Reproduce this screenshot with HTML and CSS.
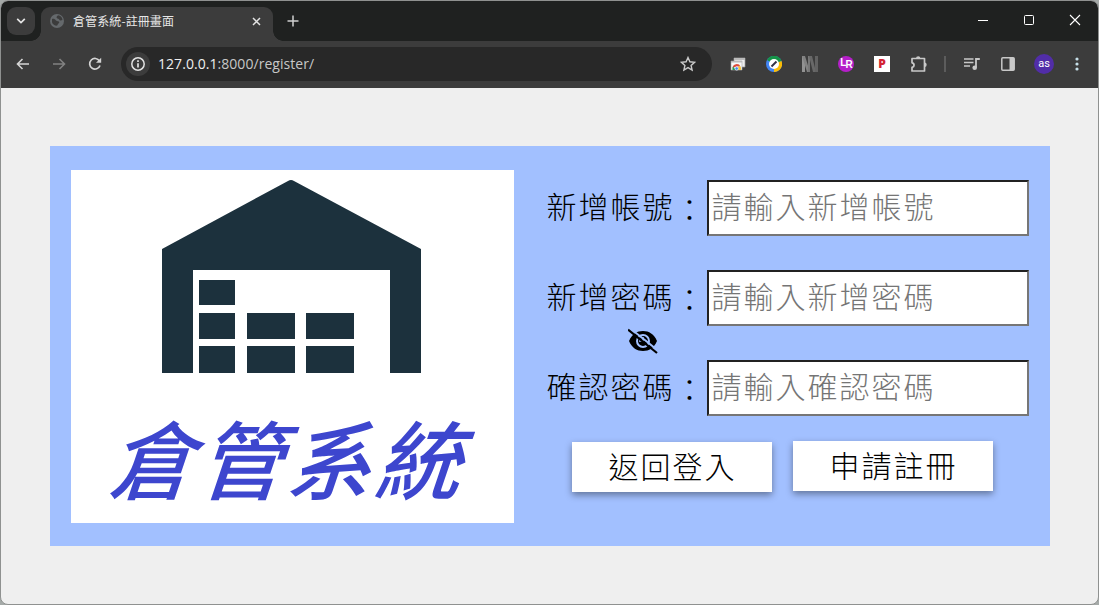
FILE: index.html
```html
<!DOCTYPE html>
<html lang="zh-Hant">
<head>
<meta charset="utf-8">
<title>倉管系統-註冊畫面</title>
<link rel="stylesheet" href="styles.css">
</head>
<body>
<div class="window">
  <header class="tabstrip">
    <button class="tab-search" aria-label="Search tabs"><svg width="10" height="6" viewBox="0 0 10 6"><path d="M1.2 .8 5 4.6 8.800 .8" fill="none" stroke="#e3e3e3" stroke-width="1.7"/></svg></button>
    <div class="tab">
      <svg width="14" height="14" viewBox="0 0 14 14"><circle cx="7" cy="7" r="7" fill="#65696c"/><path d="M2 5c2-.5 3 .3 4 1.500s3 .2 3.300 1.500-1.800 1.500-1.800 3.300c-2 1.200-5.700-1-5.500-4zM8 1.300c-.8 1.200-2 1.500-1.200 2.700s2 .3 2.400 1.500 2 1.200 3.300.5C12.500 3.500 10.500 1.500 8 1.300z" fill="#3c3c3c"/></svg>
      <span class="tab-title">倉管系統-註冊畫面</span>
      <svg class="tab-close" width="9" height="9" viewBox="0 0 9 9"><path d="M1 1 8 8M8 1 1 8" stroke="#e3e3e3" stroke-width="1.500"/></svg>
    </div>
    <svg class="new-tab" width="12" height="12" viewBox="0 0 12 12"><path d="M6 .5v11M.5 6h11" stroke="#d0d0d0" stroke-width="1.500"/></svg>
    <div class="controls">
      <svg width="12" height="12" viewBox="0 0 12 12"><path d="M1 6.500h10" stroke="#fff"/></svg>
      <svg width="12" height="12" viewBox="0 0 12 12"><rect x="1.500" y="1.500" width="9" height="9" rx="1" fill="none" stroke="#fff"/></svg>
      <svg width="12" height="12" viewBox="0 0 12 12"><path d="M1 1l10 10M11 1 1 11" stroke="#fff" stroke-width="1.100"/></svg>
    </div>
  </header>
  <nav class="toolbar">
    <svg class="nav-icon" width="14" height="12" viewBox="0 0 14 12"><path d="M13 6H2M6.500 1l-5 5 5 5" fill="none" stroke="#d5d5d5" stroke-width="1.600"/></svg>
    <svg class="nav-icon" width="14" height="12" viewBox="0 0 14 12"><path d="M1 6h11M7.500 1l5 5-5 5" fill="none" stroke="#818181" stroke-width="1.600"/></svg>
    <svg class="nav-icon" width="14" height="14" viewBox="0 0 14 14"><path d="M12 8.500A5.300 5.300 0 1 1 11.500 4" fill="none" stroke="#d5d5d5" stroke-width="1.700"/><path d="M8 5.700h5.200V.8z" fill="#d5d5d5"/></svg>
    <div class="omnibox">
      <span class="site-info"><svg width="14" height="14" viewBox="0 0 14 14"><circle cx="7" cy="7" r="6.200" fill="none" stroke="#e3e3e3" stroke-width="1.500"/><path d="M7 6.300v4.200M7 3.300v1.600" stroke="#e3e3e3" stroke-width="1.700"/></svg></span>
      <span class="url"><b>127.0.0.1</b>:8000/register/</span>
      <svg class="star" width="16" height="16" viewBox="0 0 16 16"><path d="m8 1.500 1.900 4.300 4.700.5-3.500 3.100 1 4.600L8 11.600 3.900 14l1-4.600L1.400 6.300l4.700-.5z" fill="none" stroke="#c9c9c9" stroke-width="1.400"/></svg>
    </div>
    <div class="extensions">
      <svg width="16" height="16" viewBox="0 0 16 16"><path d="M4 2h11v9H4z" fill="#eee" stroke="#999" stroke-width=".7"/><path d="M4 2h11v2H4z" fill="#bbb"/><path d="M1 5h11v9H1z" fill="#f8f8f8" stroke="#aaa" stroke-width=".6"/><path d="M1 5h11v1.500H1z" fill="#bbb"/><path d="M2.500 12a4.200 4.200 0 0 1 8-1.500H6.500z" fill="#de4b3b"/><path d="M2.500 14a5 5 0 0 1 .5-3.500L6 14z" fill="#2c9f52"/><path d="M8 10.500h2.600a5 5 0 0 1 .2 3.500H8z" fill="#f6c42e"/><circle cx="6.700" cy="12.500" r="1.700" fill="#4688ee" stroke="#fff" stroke-width=".6"/></svg>
      <svg width="16" height="16" viewBox="0 0 16 16"><circle cx="8" cy="8" r="8" fill="#4285f4"/><path d="M8 8 1 4a8 8 0 0 1 14.500 1z" fill="#159447"/><path d="m8 8 7.500-3A8 8 0 0 1 8 16z" fill="#fbbc05"/><circle cx="8" cy="8" r="5" fill="#fff"/><path d="M5.500 10.500 10.500 5.500" stroke="#334" stroke-width="2"/></svg>
      <svg width="16" height="16" viewBox="0 0 16 16"><path d="M0 0h3v16H0z" fill="#929292"/><path d="M0 0h3l5 16H5z" fill="#828282"/><path d="M6 0h2v16H6z" fill="#777"/><path d="M7 0h3l4 16h-3z" fill="#686868"/><path d="M13 0h3v16h-3z" fill="#626262"/></svg>
      <span class="badge-lr">L<i>R</i></span>
      <span class="badge-p">P</span>
      <svg width="18" height="18" viewBox="0 0 18 18"><path d="M2 3.500H14.500V16H2v-3.700c2.700-.3 2.700-4.200 0-4.500z" fill="none" stroke="#c8c8c8" stroke-width="1.700" stroke-linejoin="round"/><path d="M6 3.500a2.200 2.200 0 0 1 4.400 0zM14.500 7.500a2.200 2.200 0 0 1 0 4.400z" fill="#c8c8c8"/></svg>
    </div>
    <span class="divider"></span>
    <div class="tools">
      <svg width="16" height="14" viewBox="0 0 16 14"><path d="M0 2h9.500M0 5.500h9.500M0 9h6" stroke="#c8c8c8" stroke-width="1.600"/><path d="M12 10.500V2h3.800" fill="none" stroke="#c8c8c8" stroke-width="1.800"/><circle cx="10.700" cy="10.700" r="2.300" fill="#c8c8c8"/></svg>
      <svg width="14" height="14" viewBox="0 0 14 14"><rect x=".8" y=".8" width="12.400" height="12.400" rx="1" fill="none" stroke="#c8c8c8" stroke-width="1.500"/><path d="M8.500 1H13v12H8.500z" fill="#c8c8c8"/></svg>
      <span class="avatar">as</span>
      <svg width="4" height="14" viewBox="0 0 4 14"><g fill="#c6dfe8"><circle cx="2" cy="2" r="1.600"/><circle cx="2" cy="7" r="1.600"/><circle cx="2" cy="12" r="1.600"/></g></svg>
    </div>
  </nav>
  <main class="page">
    <section class="card">
      <div class="logo">
        <svg class="warehouse" width="262" height="196" viewBox="0 0 262 196"><g fill="#1c313d"><path d="M1 71 127 3q3-2 6 0L260 71V195H229V92H32V195H1z"/><path d="M38 102h36v25H38zM38 135h36v26H38zM38 168h36v27H38zM86 135h48v26H86zM86 168h48v27H86zM145 135h48v26h-48zM145 168h48v27h-48z"/></g></svg>
        <h1 class="brand">倉管系統</h1>
      </div>
      <form class="form">
        <div class="row"><label for="account"><span>新增帳號</span>：</label><input id="account" type="text" placeholder="請輸入新增帳號"></div>
        <div class="row"><label for="password"><span>新增密碼</span>：</label><input id="password" type="password" placeholder="請輸入新增密碼"></div>
        <div class="toggle"><svg width="30" height="26" viewBox="0 0 30 26"><path d="M1 13C4 6 9 3 15 3s11 3 14 10c-3 7-8 10-14 10S4 20 1 13z"/><circle cx="15" cy="13" r="6" fill="none" stroke="#a2c0ff" stroke-width="2"/><path d="M15 9v4h-4" fill="none" stroke="#a2c0ff" stroke-width="1.500"/><path d="M2 .3 31 23.300" stroke="#a2c0ff" stroke-width="2"/><path d="M0 1.500 29 25" stroke="#000" stroke-width="2.200"/></svg></div>
        <div class="row"><label for="confirm"><span>確認密碼</span>：</label><input id="confirm" type="password" placeholder="請輸入確認密碼"></div>
        <div class="actions"><button type="button" class="btn btn-back">返回登入</button><button type="button" class="btn">申請註冊</button></div>
      </form>
    </section>
  </main>
</div>
</body>
</html>
```
FILE: styles.css
```css
* { box-sizing: border-box; }
body {
  margin: 0;
  background: #a5aaa8;
  font-family: "Noto Sans CJK TC", sans-serif;
}
svg { display: block; flex: none; }
.window {
  width: 1099px;
  height: 605px;
  border: 1px solid #8f9190;
  border-radius: 8px;
  overflow: hidden;
  background: #efefef;
}
.tabstrip {
  display: flex;
  align-items: center;
  height: 40px;
  padding-left: 6px;
  background: #1f2120;
}
.tab-search {
  display: grid;
  place-items: center;
  width: 28px;
  height: 28px;
  padding: 0;
  border: 0;
  border-radius: 9px;
  background: #3c3c3c;
}
.tab {
  position: relative;
  display: flex;
  align-items: center;
  align-self: flex-end;
  width: 232px;
  height: 34px;
  margin-left: 6px;
  padding: 0 12px 6px 9px;
  border-radius: 9px 9px 0 0;
  background: #3c3c3c;
}
/* Curved feet joining the active tab to the toolbar */
.tab::before, .tab::after {
  content: "";
  position: absolute;
  bottom: 0;
  width: 10px;
  height: 10px;
}
.tab::before {
  right: 100%;
  background: radial-gradient(circle at 0 0, transparent 9.5px, #3c3c3c 10px);
}
.tab::after {
  left: 100%;
  background: radial-gradient(circle at 100% 0, transparent 9.5px, #3c3c3c 10px);
}
.tab-title {
  flex: 1;
  margin-left: 9px;
  font-size: 12px;
  line-height: 18px;
  letter-spacing: 0.1px;
  color: #e6e6e6;
  white-space: nowrap;
}
.new-tab { margin-left: 14px; }
.controls {
  display: flex;
  gap: 34px;
  margin-left: auto;
  padding: 0 17px 2px 0;
}
.toolbar {
  display: flex;
  align-items: center;
  height: 47px;
  padding: 0 0 1px 15px;
  background: #3c3c3c;
}
.nav-icon { margin-right: 22px; }
.omnibox {
  display: flex;
  flex: none;
  align-items: center;
  width: 591px;
  height: 34px;
  margin-left: -3px;
  padding: 0 16px 0 5px;
  border-radius: 17px;
  background: #282828;
}
.site-info {
  display: grid;
  place-items: center;
  width: 24px;
  height: 24px;
  border-radius: 50%;
  background: #3c3c3c;
}
.url {
  flex: 1;
  margin-left: 8px;
  font: 14px/20px "Open Sans", sans-serif;
  letter-spacing: 0.05px;
  color: #c7c7c7;
}
.url b { font-weight: 400; color: #efefef; }
.extensions {
  display: flex;
  flex: none;
  align-items: center;
  gap: 20px;
  margin-left: 18px;
}
.badge-lr, .badge-p {
  width: 16px;
  height: 16px;
  text-align: center;
  color: #fff;
}
.badge-lr {
  border-radius: 50%;
  background: #b51fc9;
  font: 700 10px/14px "Liberation Sans", sans-serif;
  letter-spacing: -0.8px;
}
.badge-lr i {
  position: relative;
  top: 2px;
  font-style: normal;
}
.badge-p {
  background: #fff;
  color: #d32232;
  font: 800 12px/16px "Open Sans", sans-serif;
}
.divider {
  flex: none;
  width: 2px;
  height: 16px;
  margin-left: 16px;
  background: #5c5c5c;
}
.tools {
  display: flex;
  flex: none;
  align-items: center;
  margin-left: 18px;
}
.tools svg { margin-right: 21px; }
.tools svg:last-child { margin-right: 0; }
.avatar {
  width: 20px;
  height: 20px;
  margin: 0 21px 0 -2px;
  border-radius: 50%;
  background: #512da8;
  font: 11px/19px Roboto, sans-serif;
  text-align: center;
  color: #fff;
}
.page { padding: 58px 49px 0; }
.card {
  display: flex;
  width: 1000px;
  height: 400px;
  padding: 24px 21px;
  background: #a2c0ff;
}
.logo {
  width: 443px;
  height: 353px;
  padding-top: 8px;
  background: #fff;
}
.warehouse { margin-left: 90px; }
.brand {
  margin: 34px 0 0 39px;
  font-size: 85px;
  font-style: italic;
  font-weight: 500;
  line-height: 96px;
  letter-spacing: 4px;
  white-space: nowrap;
  color: #3d46ce;
  transform: skewX(-5deg);
}
.form {
  width: 483px;
  margin-left: 33px;
  padding-top: 10px;
}
.row {
  display: flex;
  align-items: center;
  height: 56px;
}
.row + .row { margin-top: 34px; }
label {
  width: 160px;
  font-size: 30px;
  font-weight: 300;
  line-height: 44px;
  letter-spacing: 2px;
  white-space: nowrap;
}
label span {
  display: inline-block;
  transform: translateY(-3px);
}
input {
  width: 322px;
  height: 56px;
  padding: 0 2px 6px 3px;
  border: 2px inset #767676;
  background: #fff;
  font-family: inherit;
  font-size: 30px;
  font-weight: 300;
  letter-spacing: 2px;
}
input::placeholder { color: #757575; }
.toggle {
  height: 34px;
  padding: 2px 0 0 81px;
}
.actions {
  display: flex;
  gap: 21px;
  margin-top: 25px;
  padding-left: 25px;
}
.btn {
  width: 200px;
  height: 50px;
  padding: 0 0 3px 2px;
  border: 0;
  background: #fff;
  box-shadow: 0 3px 7px rgba(0, 0, 0, 0.4);
  color: #000;
  font-family: inherit;
  font-size: 30px;
  font-weight: 300;
  line-height: 47px;
  letter-spacing: 2px;
}
.btn-back { margin-top: 1px; }
```
